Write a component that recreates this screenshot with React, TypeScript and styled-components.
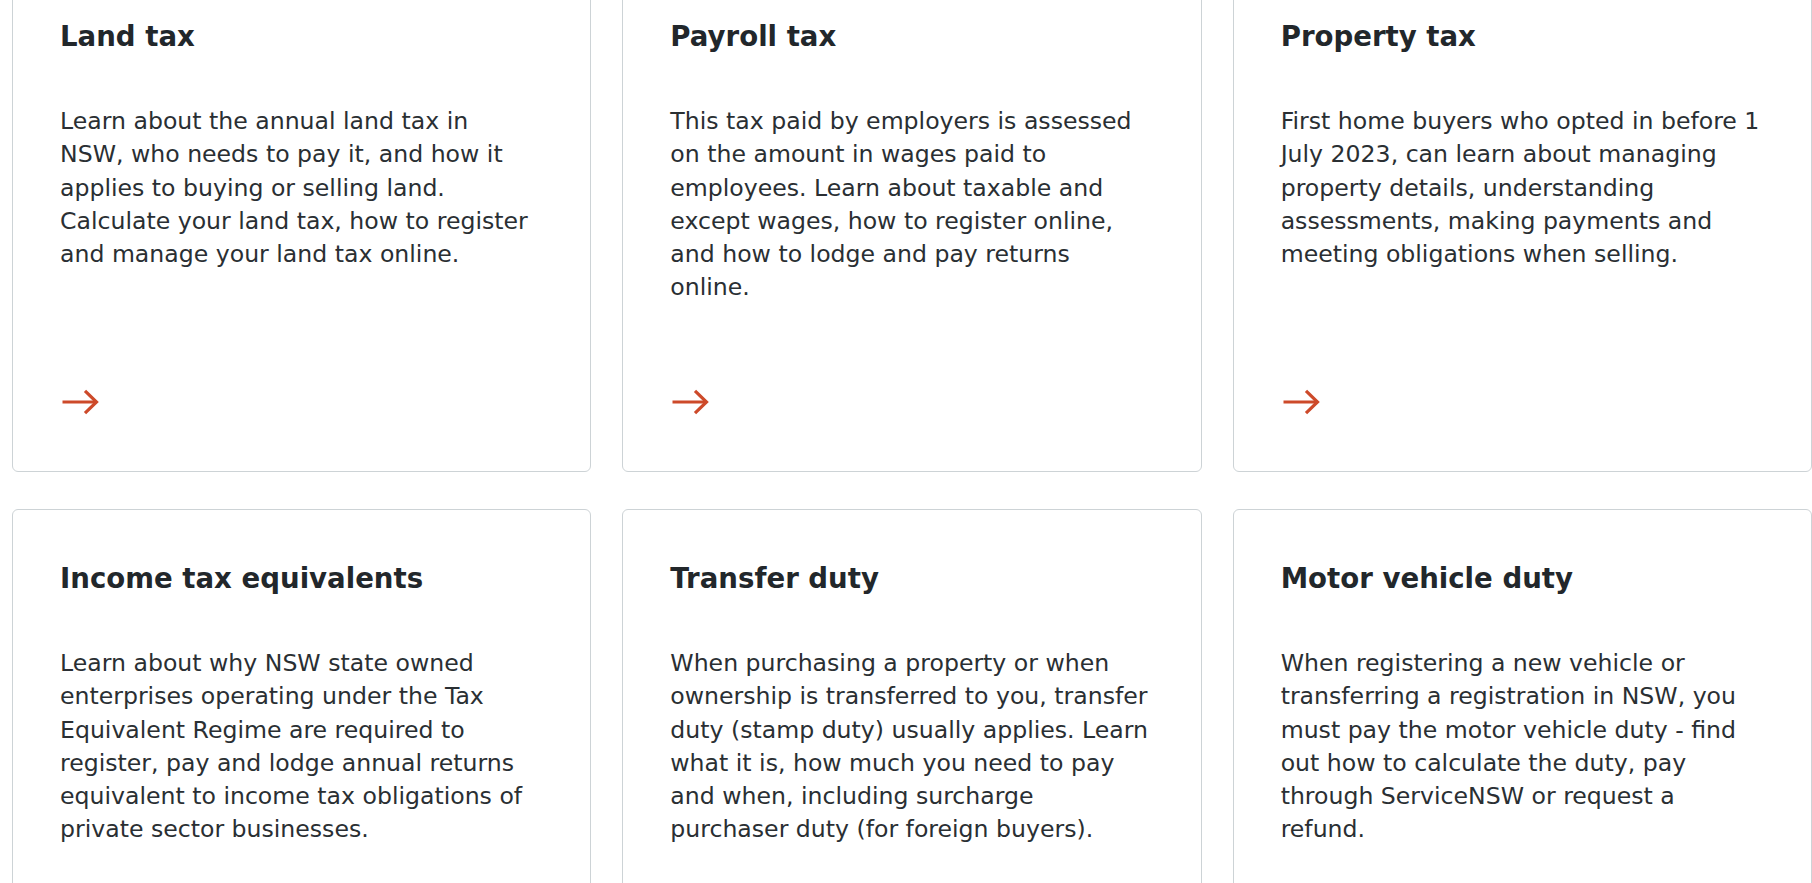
import styled, { createGlobalStyle } from "styled-components";

type TaxTopic = {
  title: string;
  lines: string[];
};

const topics: TaxTopic[] = [
  {
    title: "Land tax",
    lines: [
      "Learn about the annual land tax in",
      "NSW, who needs to pay it, and how it",
      "applies to buying or selling land.",
      "Calculate your land tax, how to register",
      "and manage your land tax online.",
    ],
  },
  {
    title: "Payroll tax",
    lines: [
      "This tax paid by employers is assessed",
      "on the amount in wages paid to",
      "employees. Learn about taxable and",
      "except wages, how to register online,",
      "and how to lodge and pay returns",
      "online.",
    ],
  },
  {
    title: "Property tax",
    lines: [
      "First home buyers who opted in before 1",
      "July 2023, can learn about managing",
      "property details, understanding",
      "assessments, making payments and",
      "meeting obligations when selling.",
    ],
  },
  {
    title: "Income tax equivalents",
    lines: [
      "Learn about why NSW state owned",
      "enterprises operating under the Tax",
      "Equivalent Regime are required to",
      "register, pay and lodge annual returns",
      "equivalent to income tax obligations of",
      "private sector businesses.",
    ],
  },
  {
    title: "Transfer duty",
    lines: [
      "When purchasing a property or when",
      "ownership is transferred to you, transfer",
      "duty (stamp duty) usually applies. Learn",
      "what it is, how much you need to pay",
      "and when, including surcharge",
      "purchaser duty (for foreign buyers).",
    ],
  },
  {
    title: "Motor vehicle duty",
    lines: [
      "When registering a new vehicle or",
      "transferring a registration in NSW, you",
      "must pay the motor vehicle duty - find",
      "out how to calculate the duty, pay",
      "through ServiceNSW or request a",
      "refund.",
    ],
  },
];

function ArrowRight() {
  return (
    <ArrowIcon viewBox="0 0 38 26" aria-hidden="true">
      <path d="M1.5 13H35.5" />
      <path d="M24 1.8L35.5 13L24 24.2" />
    </ArrowIcon>
  );
}

export default function App() {
  return (
    <>
      <GlobalStyle />
      <Grid>
        {topics.map((topic) => (
          <Card key={topic.title} href="#">
            <Title>{topic.title}</Title>
            <Description>
              {topic.lines.map((line) => (
                <Line key={line}>{line}</Line>
              ))}
            </Description>
            <ArrowRow>
              <ArrowRight />
            </ArrowRow>
          </Card>
        ))}
      </Grid>
    </>
  );
}

const GlobalStyle = createGlobalStyle`
  html, body {
    margin: 0;
    padding: 0;
    background: #ffffff;
    overflow: hidden;
  }

  body {
    font-family: "DejaVu Sans", "Noto Sans", sans-serif;
    color: #22272b;
  }
`;

const Grid = styled.section`
  display: grid;
  grid-template-columns: repeat(3, minmax(0, 1fr));
  column-gap: 31px;
  row-gap: 37px;
  width: 1812px;
  box-sizing: border-box;
  padding-left: 12px;
  margin-top: -33px;
`;

const Card = styled.a`
  display: flex;
  flex-direction: column;
  min-height: 505px;
  box-sizing: border-box;
  padding: 51px 48px 56px 47px;
  border: 1px solid #cdd3d6;
  border-radius: 6px;
  background: #ffffff;
  color: inherit;
  text-decoration: none;
`;

const Title = styled.h3`
  margin: 0;
  font-size: 27.6px;
  line-height: 35px;
  font-weight: 700;
  color: #22272b;
`;

const Description = styled.p`
  margin: 51px 0 0;
  font-size: 23.6px;
  line-height: 33.3px;
  font-weight: 400;
  color: #2a2f33;
`;

const Line = styled.span`
  display: block;
  white-space: nowrap;
`;

const ArrowRow = styled.div`
  display: flex;
  margin-top: auto;
  height: 26px;
  padding-left: 1px;
`;

const ArrowIcon = styled.svg`
  width: 38px;
  height: 26px;
  fill: none;
  stroke: #cd4a2a;
  stroke-width: 3.2;
`;
